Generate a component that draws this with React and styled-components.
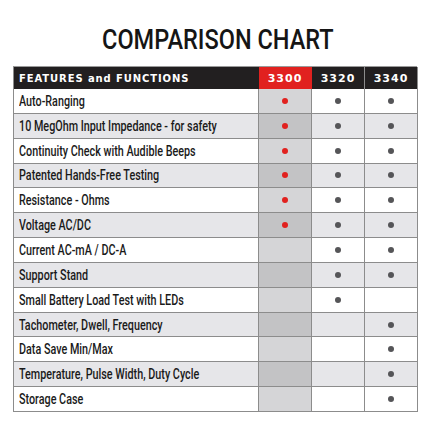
import React from "react";
import styled, { createGlobalStyle } from "styled-components";

const rows = [
  ["Auto-Ranging", 1, 1, 1],
  ["10 MegOhm Input Impedance - for safety", 1, 1, 1],
  ["Continuity Check with Audible Beeps", 1, 1, 1],
  ["Patented Hands-Free Testing", 1, 1, 1],
  ["Resistance - Ohms", 1, 1, 1],
  ["Voltage AC/DC", 1, 1, 1],
  ["Current AC-mA / DC-A", 0, 1, 1],
  ["Support Stand", 0, 1, 1],
  ["Small Battery Load Test with LEDs", 0, 1, 0],
  ["Tachometer, Dwell, Frequency", 0, 0, 1],
  ["Data Save Min/Max", 0, 0, 1],
  ["Temperature, Pulse Width, Duty Cycle", 0, 0, 1],
  ["Storage Case", 0, 0, 1],
];

const models = ["3300", "3320", "3340"];

export default function App() {
  return (
    <Page>
      <GlobalStyle />
      <Title>
        <TitleText>COMPARISON CHART</TitleText>
      </Title>
      <Chart>
        <HeadCell>FEATURES and FUNCTIONS</HeadCell>
        {models.map((m, i) => (
          <HeadCell key={m} $model $first={i === 0}>
            {m}
          </HeadCell>
        ))}
        {rows.map((r, ri) => {
          const shaded = ri % 2 === 1;
          return (
            <React.Fragment key={r[0]}>
              <Feature $shaded={shaded}>
                <Narrow>{r[0]}</Narrow>
              </Feature>
              {r.slice(1).map((has, ci) => (
                <Mark key={ci} $shaded={shaded} $first={ci === 0}>
                  {has ? <Dot $red={ci === 0} /> : null}
                </Mark>
              ))}
            </React.Fragment>
          );
        })}
      </Chart>
    </Page>
  );
}

const GlobalStyle = createGlobalStyle`
  body {
    margin: 0;
    background: #fff;
  }
`;

const Page = styled.div`
  width: 430px;
  height: 430px;
  padding: 24px 13px 0;
  box-sizing: border-box;
  display: flex;
  flex-direction: column;
  align-items: stretch;
`;

const Title = styled.h1`
  margin: 0 0 10px;
  height: 32px;
  line-height: 32px;
  text-align: center;
  font-family: Roboto, "Liberation Sans", sans-serif;
  font-weight: 500;
  font-size: 28px;
  color: #151515;
`;

const TitleText = styled.span`
  display: inline-block;
  transform: translateX(3px) scaleX(0.84);
  transform-origin: center;
`;

const Chart = styled.div`
  display: grid;
  grid-template-columns: 245px 53px 53px 53px;
  grid-template-rows: 22px;
  grid-auto-rows: 24.85px;
  border-left: 1px solid #8c8c8c;
  border-top: 1px solid #9a9a9a;
  width: 404px;
  box-sizing: border-box;
`;

const HeadCell = styled.div`
  background: ${(p) => (p.$first ? "#e1211f" : "#221f20")};
  color: #fff;
  font-family: "DejaVu Sans", sans-serif;
  font-weight: 700;
  font-size: ${(p) => (p.$model ? "11px" : "10px")};
  letter-spacing: ${(p) => (p.$model ? "1px" : "0.9px")};
  display: flex;
  align-items: center;
  justify-content: ${(p) => (p.$model ? "center" : "flex-start")};
  padding-left: ${(p) => (p.$model ? "0" : "5px")};
  border-right: 1px solid ${(p) => (p.$model && !p.$first ? "#8c8c8c" : "transparent")};
  box-sizing: border-box;
`;

const Feature = styled.div`
  background: ${(p) => (p.$shaded ? "#e6e6e9" : "#ffffff")};
  border-bottom: 1px solid #8c8c8c;
  border-right: 1px solid #8c8c8c;
  box-sizing: border-box;
  display: flex;
  align-items: center;
  padding-left: 5px;
  font-family: Roboto, "Liberation Sans", sans-serif;
  font-weight: 500;
  font-size: 14px;
  color: #1a1a1a;
  white-space: nowrap;
`;

const Narrow = styled.span`
  display: inline-block;
  transform: scaleX(0.77);
  transform-origin: left center;
`;

const Mark = styled.div`
  background: ${(p) =>
    p.$first
      ? p.$shaded
        ? "#c3c3c5"
        : "#d5d5d7"
      : p.$shaded
      ? "#e6e6e9"
      : "#ffffff"};
  border-bottom: 1px solid #8c8c8c;
  border-right: 1px solid #8c8c8c;
  box-sizing: border-box;
  display: flex;
  align-items: center;
  justify-content: center;
`;

const Dot = styled.span`
  width: 6px;
  height: 6px;
  border-radius: 50%;
  background: ${(p) => (p.$red ? "#e1211f" : "#555558")};
`;
